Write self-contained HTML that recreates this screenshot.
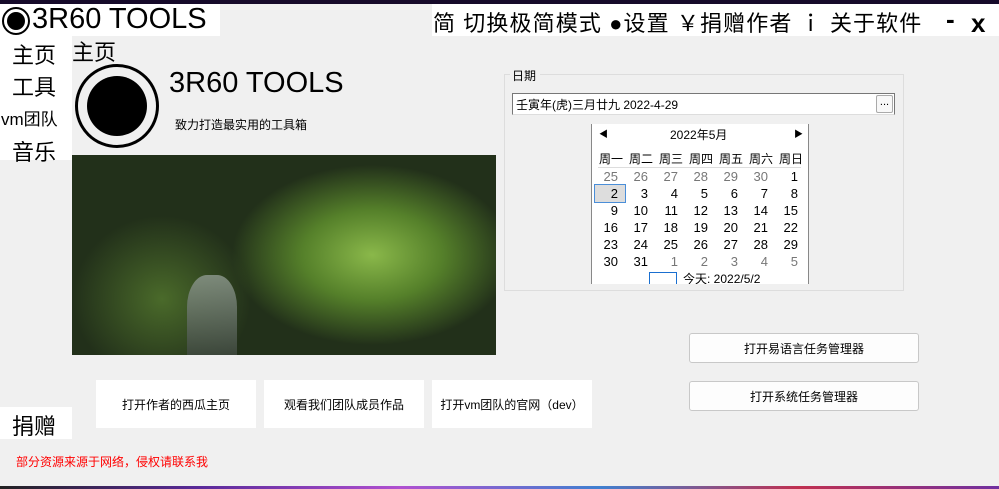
<!DOCTYPE html>
<html><head><meta charset="utf-8"><style>
*{margin:0;padding:0;box-sizing:border-box}
body{width:999px;height:489px;background:#f0f0f0;position:relative;overflow:hidden;font-family:"Liberation Sans","Noto Sans CJK SC",sans-serif;color:#000}
.a{position:absolute;white-space:nowrap}
.w{background:#fff}
.cal td{width:30px;text-align:right;padding-right:7px;height:17px;font-size:13px}
.g{color:#777}
.btn{position:absolute;background:#fff;font-size:12px;display:flex;align-items:center;justify-content:center}
.b2{position:absolute;background:#fdfdfd;border:1px solid #c8c8c8;border-radius:3px;font-size:12px;display:flex;align-items:center;justify-content:center}
.wk span{display:inline-block;width:30px;text-align:center}
</style></head><body>
<div class="a" style="left:0;top:0;width:999px;height:4px;background:#160a2a"></div>
<div class="a w" style="left:0;top:4px;width:220px;height:32px"></div>
<div class="a" style="left:2px;top:7px;width:28px;height:28px;border:2px solid #000;border-radius:50%"><div style="position:absolute;left:3px;top:3px;width:18px;height:18px;border-radius:50%;background:#000"></div></div>
<div class="a" style="left:32px;top:3px;font-size:29px">3R60 TOOLS</div>
<div class="a w" style="left:432px;top:4px;width:567px;height:32px"></div>
<div class="a" style="left:433px;top:6px;font-size:22px;letter-spacing:1.1px">简 切换极简模式 ●设置 ￥捐赠作者 ｉ 关于软件</div>
<div class="a" style="left:946px;top:4px;font-size:26px;font-weight:bold">-</div>
<div class="a" style="left:971px;top:8px;font-size:26px;font-weight:bold">x</div>
<div class="a w" style="left:0;top:36px;width:72px;height:124px"></div>
<div class="a" style="left:12px;top:38px;font-size:22px">主页</div>
<div class="a" style="left:12px;top:70px;font-size:22px">工具</div>
<div class="a" style="left:1px;top:105px;font-size:17px">vm团队</div>
<div class="a" style="left:12px;top:135px;font-size:22px">音乐</div>
<div class="a" style="left:72px;top:35px;font-size:22px">主页</div>
<div class="a" style="left:75px;top:64px;width:84px;height:84px;border:3px solid #000;border-radius:50%"><div style="position:absolute;left:9px;top:9px;width:60px;height:60px;border-radius:50%;background:#000"></div></div>
<div class="a" style="left:169px;top:67px;font-size:29px">3R60 TOOLS</div>
<div class="a" style="left:175px;top:116px;font-size:12px">致力打造最实用的工具箱</div>
<div class="a" style="left:72px;top:155px;width:424px;height:200px;overflow:hidden;background:#22301a">
<div style="position:absolute;left:0;top:0;width:424px;height:200px;background:radial-gradient(ellipse 140px 90px at 300px 100px,#8ab84a,#55802a 50%,transparent 100%)"></div>
<div style="position:absolute;left:0;top:60px;width:180px;height:140px;background:radial-gradient(ellipse at 50% 60%,#4a6a2a,transparent 70%)"></div>
<div style="position:absolute;left:115px;top:120px;width:50px;height:80px;background:linear-gradient(#8a968a,#404a40);border-radius:40% 40% 0 0;opacity:.85"></div></div>
<div class="a" style="left:512px;top:67px;font-size:12px">日期</div>
<div class="a" style="left:504px;top:74px;width:400px;height:217px;border:1px solid #ddd;border-top:none"></div>
<div class="a" style="left:504px;top:74px;width:6px;border-top:1px solid #ddd"></div>
<div class="a" style="left:540px;top:74px;width:364px;border-top:1px solid #ddd"></div>
<div class="a w" style="left:512px;top:93px;width:383px;height:22px;border:1px solid #777;border-bottom-color:#ddd;font-size:12px;padding:2px 3px">壬寅年(虎)三月廿九 2022-4-29</div>
<div class="a" style="left:876px;top:95px;width:17px;height:18px;border:1px solid #aaa;border-radius:2px;background:#f8f8f8;font-size:11px;text-align:center;line-height:12px">...</div>
<div class="a w" style="left:591px;top:124px;width:218px;height:160px;border-left:1px solid #888;border-right:1px solid #888"></div>
<div class="a" style="left:599px;top:127px;font-size:9px">◀</div>
<div class="a" style="left:794px;top:127px;font-size:9px">▶</div>
<div class="a" style="left:670px;top:126px;font-size:12px">2022年5月</div>
<div class="a wk" style="left:596px;top:150px;font-size:12px"><span>周一</span><span>周二</span><span>周三</span><span>周四</span><span>周五</span><span>周六</span><span>周日</span></div>
<div class="a" style="left:598px;top:167px;width:203px;border-top:1px solid #ddd"></div>
<table class="a cal" style="left:595px;top:168px;border-collapse:collapse">
<tr><td class="g">25</td><td class="g">26</td><td class="g">27</td><td class="g">28</td><td class="g">29</td><td class="g">30</td><td>1</td></tr>
<tr><td style="background:#ddd;outline:1px solid #4a8ed8">2</td><td>3</td><td>4</td><td>5</td><td>6</td><td>7</td><td>8</td></tr>
<tr><td>9</td><td>10</td><td>11</td><td>12</td><td>13</td><td>14</td><td>15</td></tr>
<tr><td>16</td><td>17</td><td>18</td><td>19</td><td>20</td><td>21</td><td>22</td></tr>
<tr><td>23</td><td>24</td><td>25</td><td>26</td><td>27</td><td>28</td><td>29</td></tr>
<tr><td>30</td><td>31</td><td class="g">1</td><td class="g">2</td><td class="g">3</td><td class="g">4</td><td class="g">5</td></tr>
</table>
<div class="a" style="left:649px;top:272px;width:28px;height:12px;border:1px solid #1a6fd0;border-bottom:none"></div>
<div class="a" style="left:683px;top:270px;font-size:12px;height:14px;overflow:hidden">今天: 2022/5/2</div>
<div class="b2" style="left:689px;top:333px;width:230px;height:30px">打开易语言任务管理器</div>
<div class="b2" style="left:689px;top:381px;width:230px;height:30px">打开系统任务管理器</div>
<div class="btn" style="left:96px;top:380px;width:160px;height:48px">打开作者的西瓜主页</div>
<div class="btn" style="left:264px;top:380px;width:160px;height:48px">观看我们团队成员作品</div>
<div class="btn" style="left:432px;top:380px;width:160px;height:48px">打开vm团队的官网（dev）</div>
<div class="a w" style="left:0;top:407px;width:72px;height:32px"></div>
<div class="a" style="left:12px;top:409px;font-size:22px">捐赠</div>
<div class="a" style="left:16px;top:453px;font-size:12px;color:#f00">部分资源来源于网络，侵权请联系我</div>
<div class="a" style="left:0;top:486px;width:999px;height:3px;background:linear-gradient(90deg,#222,#5a2a9a,#b050d0,#4080d0,#c03050,#7030a0)"></div>
</body></html>
